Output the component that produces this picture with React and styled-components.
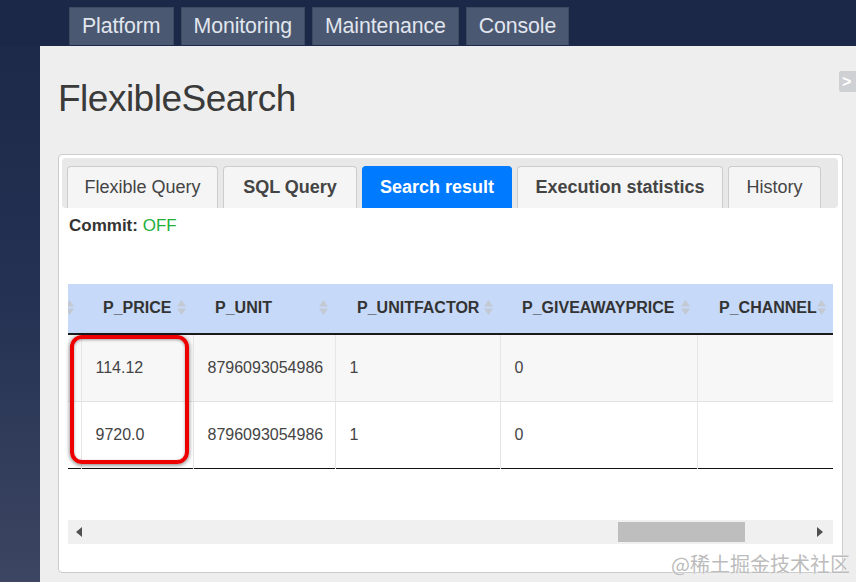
import React from "react";
import styled, { createGlobalStyle } from "styled-components";

const Global = createGlobalStyle`
  html, body { margin: 0; padding: 0; }
  body { font-family: "Liberation Sans", Arial, sans-serif; overflow: hidden; }
  * { box-sizing: border-box; }
`;

const Page = styled.div`
  width: 856px;
  height: 582px;
  background: linear-gradient(180deg, #1b2847 0%, #243152 50%, #3c4662 100%);
  display: flex;
  flex-direction: column;
  position: relative;
  overflow: hidden;
`;

const TopNav = styled.nav`
  height: 46px;
  display: flex;
  align-items: flex-start;
  gap: 7px;
  padding: 7px 0 0 69px;
  background: #1b2847;
`;

const NavTab = styled.div`
  height: 38px;
  padding: 0 12px;
  display: flex;
  align-items: center;
  background: #4b5871;
  border: 1px solid #3e4a62;
  border-bottom: none;
  color: #e1e6ee;
  font-size: 21.3px;
  letter-spacing: -0.1px;
`;

const Main = styled.main`
  flex: 1;
  margin-left: 40px;
  background: #eeeeee;
  padding: 0 0 0 18px;
  position: relative;
  display: flex;
  flex-direction: column;
`;

const Toggle = styled.div`
  position: absolute;
  top: 25px;
  right: -4px;
  width: 21px;
  height: 21px;
  background: #cfd0d3;
  border-radius: 2px;
  color: #ffffff;
  font-weight: bold;
  font-size: 16px;
  display: flex;
  align-items: center;
  padding-left: 3px;
`;

const Title = styled.h1`
  margin: 0;
  padding-top: 32px;
  font-size: 37px;
  line-height: 42px;
  font-weight: normal;
  color: #3a3a3a;
  letter-spacing: -0.5px;
`;

const Card = styled.section`
  margin-top: 34px;
  width: 785px;
  height: 419px;
  background: #ffffff;
  border: 1px solid #cccccc;
  border-radius: 4px;
  padding: 3px 4px 0 3px;
  display: flex;
  flex-direction: column;
`;

const TabBar = styled.div`
  height: 50px;
  background: #e8e8e8;
  border-radius: 4px;
  padding: 8px 5px 0 5px;
  display: flex;
  align-items: flex-end;
  gap: 5px;
`;

const Tab = styled.div`
  flex: 0 0 auto;
  width: ${(p) => p.$w}px;
  height: 42px;
  display: flex;
  align-items: center;
  justify-content: center;
  white-space: nowrap;
  border: 1px solid ${(p) => (p.$active ? "#007bff" : "#cccccc")};
  border-bottom: none;
  border-radius: 4px 4px 0 0;
  background: ${(p) => (p.$active ? "#007bff" : "#f5f5f5")};
  color: ${(p) => (p.$active ? "#ffffff" : "#444444")};
  font-size: 18px;
  font-weight: ${(p) => (p.$bold ? "bold" : "normal")};
`;

const Body = styled.div`
  padding: 0 6px 0 6px;
  display: flex;
  flex-direction: column;
`;

const Commit = styled.div`
  height: 38px;
  padding: 8px 0 0 1px;
  font-size: 17px;
  color: #333333;
  font-weight: bold;
`;

const Off = styled.span`
  color: #22b03a;
  font-weight: normal;
`;

const TableWrap = styled.div`
  margin-top: 38px;
  position: relative;
  width: 765px;
`;

const Table = styled.table`
  width: 765px;
  border-collapse: collapse;
  table-layout: fixed;
  border-bottom: 1px solid #111111;
`;

const Th = styled.th`
  height: 50px;
  background: #c6d9f8;
  border-bottom: 2px solid #1a1a1a;
  text-align: left;
  padding: 0 0 2px ${(p) => (p.$pad === undefined ? 22 : p.$pad)}px;
  font-size: 16px;
  font-weight: bold;
  color: #333333;
  position: relative;
  white-space: nowrap;
  overflow: hidden;
`;

const SortIcon = styled.svg`
  position: absolute;
  right: 7px;
  top: 16px;
  display: block;
`;

const Tr = styled.tr`
  background: ${(p) => (p.$odd ? "#f7f7f7" : "#ffffff")};
`;

const Td = styled.td`
  height: 67px;
  padding: 0 0 0 14px;
  font-size: 16px;
  color: #444444;
  border-left: 1px solid #e6e6e6;
  border-top: 1px solid #e2e2e2;
  white-space: nowrap;
  overflow: hidden;
  &:first-child { border-left: none; }
`;

const Highlight = styled.div`
  position: absolute;
  left: 2px;
  top: 51px;
  width: 119px;
  height: 129px;
  border: 4px solid #ee0000;
  border-radius: 12px;
  box-shadow: 0 1px 4px rgba(0, 0, 0, 0.55), inset 0 1px 3px rgba(0, 0, 0, 0.35);
  pointer-events: none;
`;

const Scrollbar = styled.div`
  margin-top: 51px;
  width: 765px;
  height: 24px;
  background: #f0f0f0;
  display: flex;
  align-items: center;
  justify-content: space-between;
  padding: 0 10px 0 8px;
  position: relative;
`;

const Thumb = styled.div`
  position: absolute;
  left: 550px;
  top: 2px;
  width: 127px;
  height: 20px;
  background: #bebebe;
`;

const Watermark = styled.div`
  position: absolute;
  right: 6px;
  bottom: 6px;
  font-family: "Noto Sans CJK SC", sans-serif;
  font-size: 20px;
  line-height: 24px;
  color: #bcbcbc;
  text-shadow: 0 0 1px #ffffff, 0 0 1px #ffffff;
`;

const Sort = () => (
  <SortIcon width="9" height="15" viewBox="0 0 9 15">
    <path d="M4.5 0 L9 6.5 L0 6.5 Z" fill="#c3c9d3" />
    <path d="M0 8.5 L9 8.5 L4.5 15 Z" fill="#c3c9d3" />
  </SortIcon>
);

const cols = [
  { w: 13, label: "", pad: 0 },
  { w: 112, label: "P_PRICE" },
  { w: 142, label: "P_UNIT" },
  { w: 165, label: "P_UNITFACTOR" },
  { w: 197, label: "P_GIVEAWAYPRICE" },
  { w: 136, label: "P_CHANNEL" },
];

const rows = [
  ["114.12", "8796093054986", "1", "0", ""],
  ["9720.0", "8796093054986", "1", "0", ""],
];

const tabs = [
  { label: "Flexible Query", w: 151 },
  { label: "SQL Query", w: 134, bold: true },
  { label: "Search result", w: 150, bold: true, active: true },
  { label: "Execution statistics", w: 206, bold: true },
  { label: "History", w: 93 },
];

export default function App() {
  return (
    <>
      <Global />
      <Page>
        <TopNav>
          <NavTab>Platform</NavTab>
          <NavTab>Monitoring</NavTab>
          <NavTab>Maintenance</NavTab>
          <NavTab>Console</NavTab>
        </TopNav>
        <Main>
          <Toggle>&gt;</Toggle>
          <Title>FlexibleSearch</Title>
          <Card>
            <TabBar>
              {tabs.map((t) => (
                <Tab key={t.label} $w={t.w} $bold={t.bold} $active={t.active}>
                  {t.label}
                </Tab>
              ))}
            </TabBar>
            <Body>
              <Commit>
                Commit: <Off>OFF</Off>
              </Commit>
              <TableWrap>
                <Table>
                  <colgroup>
                    {cols.map((c, i) => (
                      <col key={i} style={{ width: c.w }} />
                    ))}
                  </colgroup>
                  <thead>
                    <tr>
                      {cols.map((c, i) => (
                        <Th key={i} $pad={c.pad}>
                          {c.label}
                          <Sort />
                        </Th>
                      ))}
                    </tr>
                  </thead>
                  <tbody>
                    {rows.map((r, i) => (
                      <Tr key={i} $odd={i === 0}>
                        <Td />
                        {r.map((v, j) => (
                          <Td key={j}>{v}</Td>
                        ))}
                      </Tr>
                    ))}
                  </tbody>
                </Table>
                <Highlight />
              </TableWrap>
              <Scrollbar>
                <svg width="6" height="10" viewBox="0 0 6 10">
                  <path d="M6 0 L6 10 L0 5 Z" fill="#505050" />
                </svg>
                <Thumb />
                <svg width="6" height="10" viewBox="0 0 6 10">
                  <path d="M0 0 L6 5 L0 10 Z" fill="#505050" />
                </svg>
              </Scrollbar>
            </Body>
          </Card>
        </Main>
        <Watermark>@稀土掘金技术社区</Watermark>
      </Page>
    </>
  );
}
